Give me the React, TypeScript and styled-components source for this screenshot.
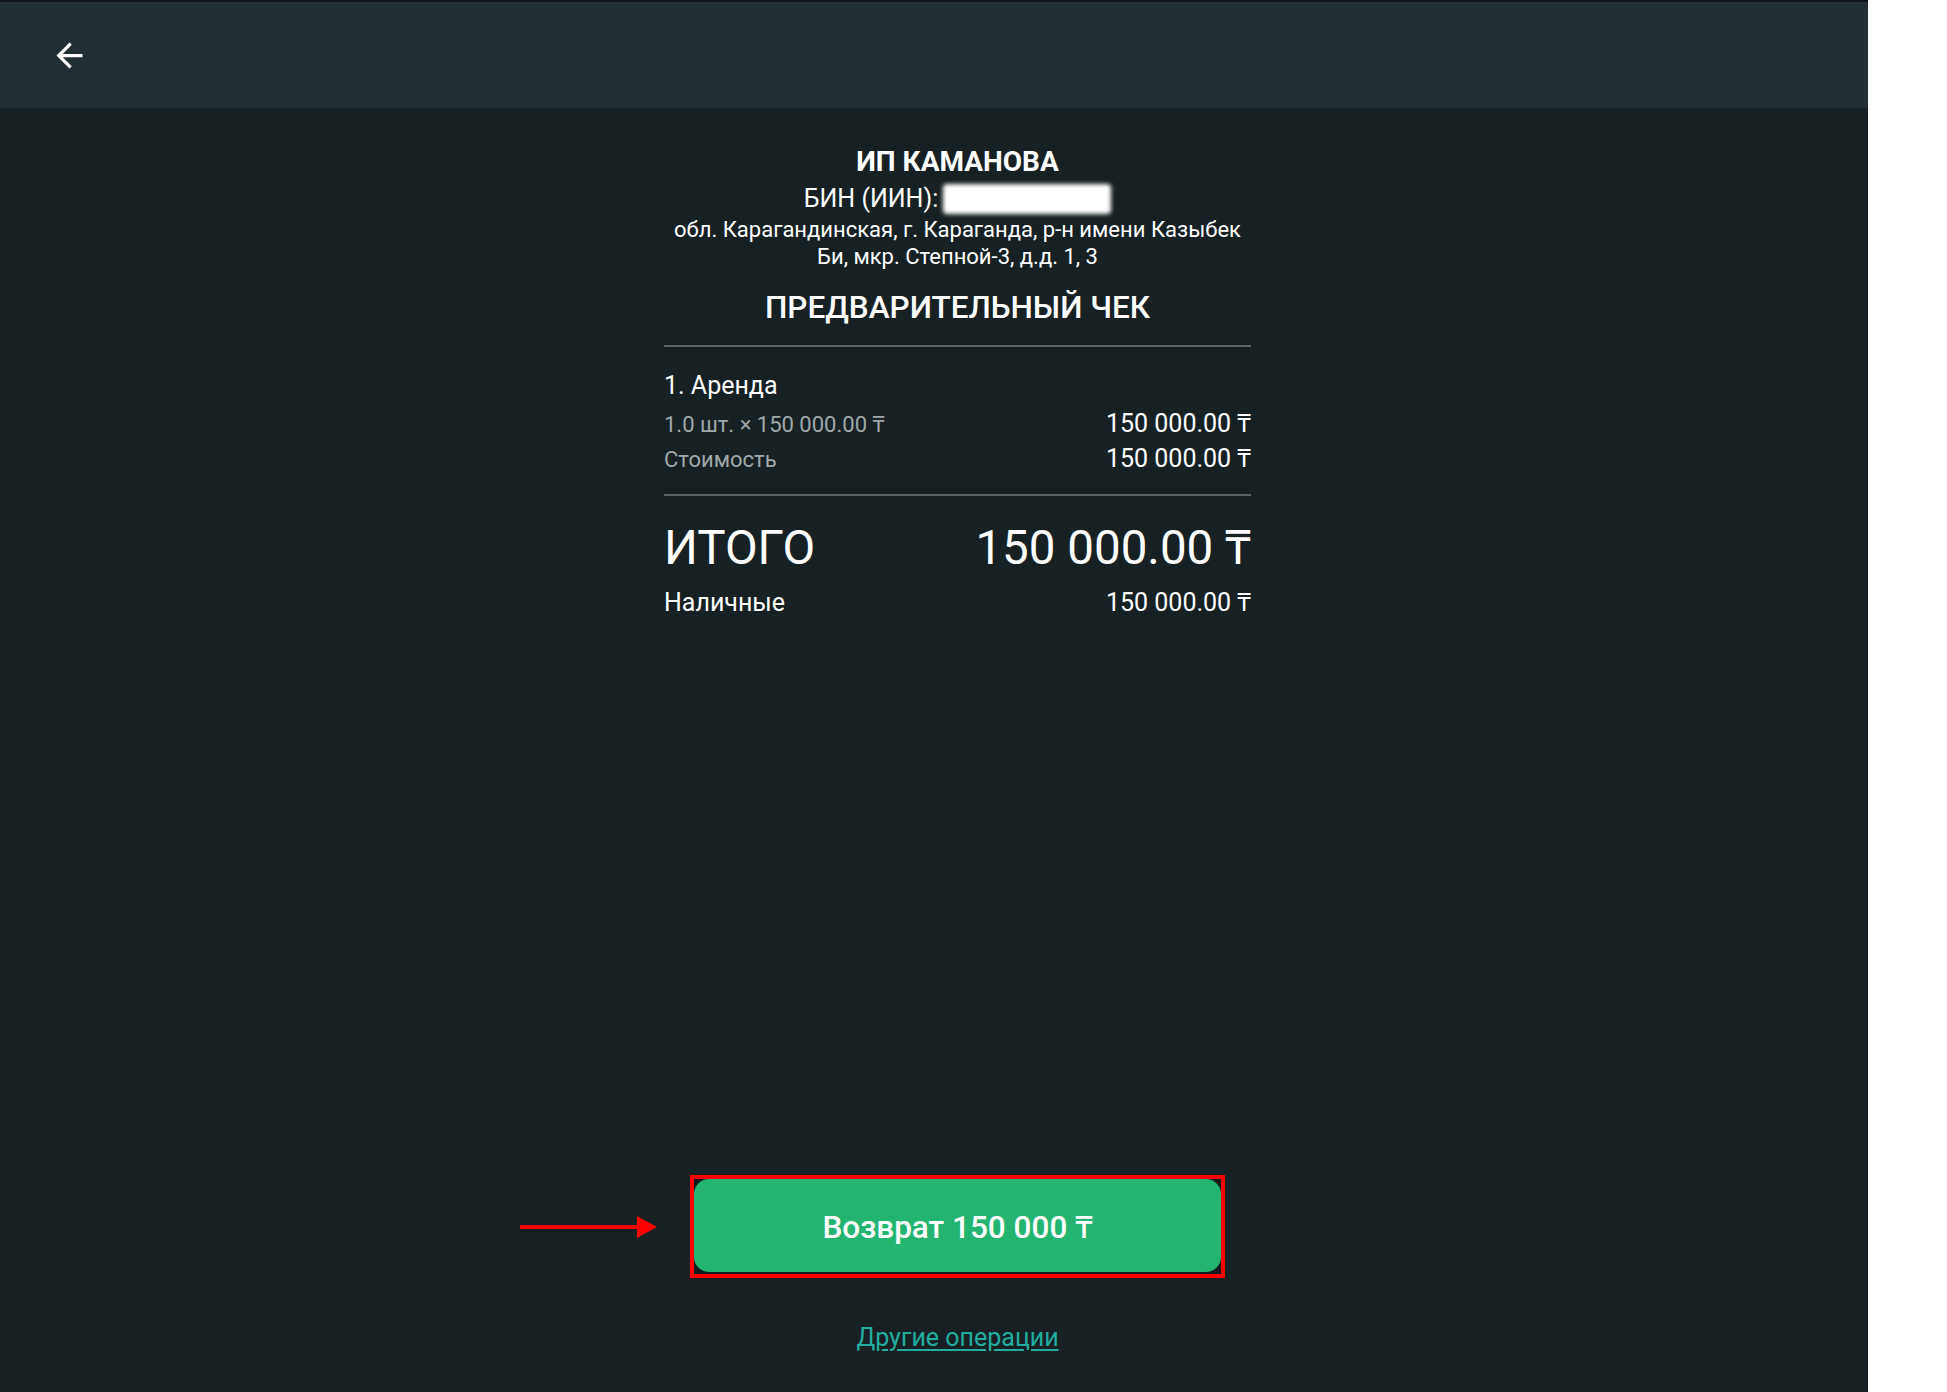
import styled, { createGlobalStyle } from "styled-components";
import { MdArrowBack } from "react-icons/md";

const GlobalStyle = createGlobalStyle`
  html, body {
    margin: 0;
    padding: 0;
    background: #ffffff;
    font-family: Roboto, "Noto Sans", "Liberation Sans", sans-serif;
  }
`;

const items = [
  {
    title: "1. Аренда",
    qty: "1.0 шт. × 150 000.00 ₸",
    sum: "150 000.00 ₸",
    cost: "150 000.00 ₸",
  },
];

function App() {
  return (
    <>
      <GlobalStyle />
      <Screen>
        <Header>
          <BackButton aria-label="Назад">
            <MdArrowBack size={39} />
          </BackButton>
        </Header>

        <Body>
          <Receipt>
            <Company>ИП КАМАНОВА</Company>
            <BinRow>
              <span>БИН (ИИН):</span>
              <Hidden />
            </BinRow>
            <Address>
              обл. Карагандинская, г. Караганда, р-н имени Казыбек
              <br />
              Би, мкр. Степной-3, д.д. 1, 3
            </Address>
            <ReceiptTitle>ПРЕДВАРИТЕЛЬНЫЙ ЧЕК</ReceiptTitle>

            <Divider $gap={19} />

            {items.map((item) => (
              <Item key={item.title}>
                <ItemName>{item.title}</ItemName>
                <Line $first>
                  <Muted>{item.qty}</Muted>
                  <Amount>{item.sum}</Amount>
                </Line>
                <Line>
                  <Muted>Стоимость</Muted>
                  <Amount>{item.cost}</Amount>
                </Line>
              </Item>
            ))}

            <Divider $gap={19} />

            <TotalRow>
              <span>ИТОГО</span>
              <span>150 000.00 ₸</span>
            </TotalRow>
            <PayRow>
              <PayLabel>Наличные</PayLabel>
              <Amount>150 000.00 ₸</Amount>
            </PayRow>
          </Receipt>

          <Footer>
            <Highlight>
              <Pointer>
                <svg width="137" height="22" viewBox="0 0 137 22">
                  <rect x="0" y="9" width="118" height="4" fill="#ff0000" />
                  <polygon points="117,0 137,11 117,22" fill="#ff0000" />
                </svg>
              </Pointer>
              <RefundButton>Возврат 150 000 ₸</RefundButton>
            </Highlight>
            <OtherLink href="#">Другие операции</OtherLink>
          </Footer>
        </Body>
      </Screen>
    </>
  );
}

export default App;

const Screen = styled.div`
  width: 1868px;
  min-height: 1392px;
  display: flex;
  flex-direction: column;
  background: #172124;
  color: #ffffff;
  box-sizing: border-box;
  border-top: 2px solid #0f1416;
`;

const Header = styled.div`
  height: 106px;
  flex-shrink: 0;
  display: flex;
  align-items: center;
  padding-left: 50px;
  background: #222f34;
`;

const BackButton = styled.button`
  display: flex;
  align-items: center;
  justify-content: center;
  padding: 0;
  border: none;
  background: transparent;
  color: #ffffff;
  cursor: pointer;
`;

const Body = styled.div`
  flex: 1;
  display: flex;
  flex-direction: column;
  align-items: center;
  justify-content: space-between;
  padding: 38px 0 39px 47px;
`;

const Receipt = styled.div`
  width: 587px;
  display: flex;
  flex-direction: column;
`;

const Company = styled.div`
  font-size: 28px;
  line-height: 32px;
  font-weight: 700;
  text-align: center;
`;

const BinRow = styled.div`
  margin-top: 5px;
  height: 32px;
  display: flex;
  align-items: center;
  justify-content: center;
  gap: 5px;
  font-size: 25px;
  line-height: 32px;
`;

const Hidden = styled.span`
  display: block;
  width: 168px;
  height: 30px;
  border-radius: 4px;
  background: #ffffff;
  filter: blur(2px);
`;

const Address = styled.div`
  margin-top: 1px;
  font-size: 22px;
  line-height: 27px;
  text-align: center;
`;

const ReceiptTitle = styled.div`
  margin-top: 20px;
  font-size: 31.5px;
  line-height: 36px;
  font-weight: 500;
  text-align: center;
`;

const Divider = styled.div<{ $gap: number }>`
  margin-top: ${(p) => p.$gap}px;
  height: 2px;
  background: #5b6466;
`;

const Item = styled.div`
  margin-top: 24px;
  display: flex;
  flex-direction: column;
`;

const ItemName = styled.div`
  font-size: 25px;
  line-height: 30px;
`;

const Line = styled.div<{ $first?: boolean }>`
  margin-top: ${(p) => (p.$first ? 8 : 4)}px;
  display: flex;
  justify-content: space-between;
  align-items: baseline;
  line-height: 30px;
`;

const Muted = styled.span`
  font-size: 22px;
  color: #a1a8aa;
`;

const Amount = styled.span`
  font-size: 25px;
  color: #ffffff;
`;

const TotalRow = styled.div`
  margin-top: 24px;
  display: flex;
  justify-content: space-between;
  align-items: baseline;
  font-size: 47.5px;
  line-height: 56px;
`;

const PayRow = styled.div`
  margin-top: 12px;
  display: flex;
  justify-content: space-between;
  align-items: baseline;
  line-height: 30px;
`;

const PayLabel = styled.span`
  font-size: 25px;
`;

const Footer = styled.div`
  display: flex;
  flex-direction: column;
  align-items: center;
  gap: 45px;
`;

const Highlight = styled.div`
  position: relative;
  border: 4px solid #ff0000;
  padding-bottom: 2px;
  background: #131b1d;
`;

const Pointer = styled.div`
  position: absolute;
  right: calc(100% + 37px);
  top: 50%;
  transform: translateY(-50%);
  display: flex;
`;

const RefundButton = styled.button`
  display: flex;
  align-items: center;
  justify-content: center;
  width: 527px;
  height: 93px;
  border: none;
  border-radius: 15px;
  background: #23b472;
  color: #ffffff;
  font-family: Roboto, "Noto Sans", sans-serif;
  font-size: 31.5px;
  font-weight: 500;
  cursor: pointer;
`;

const OtherLink = styled.a`
  font-size: 25px;
  line-height: 30px;
  color: #22ae9f;
  text-decoration: underline;
  text-underline-offset: 3px;
`;
